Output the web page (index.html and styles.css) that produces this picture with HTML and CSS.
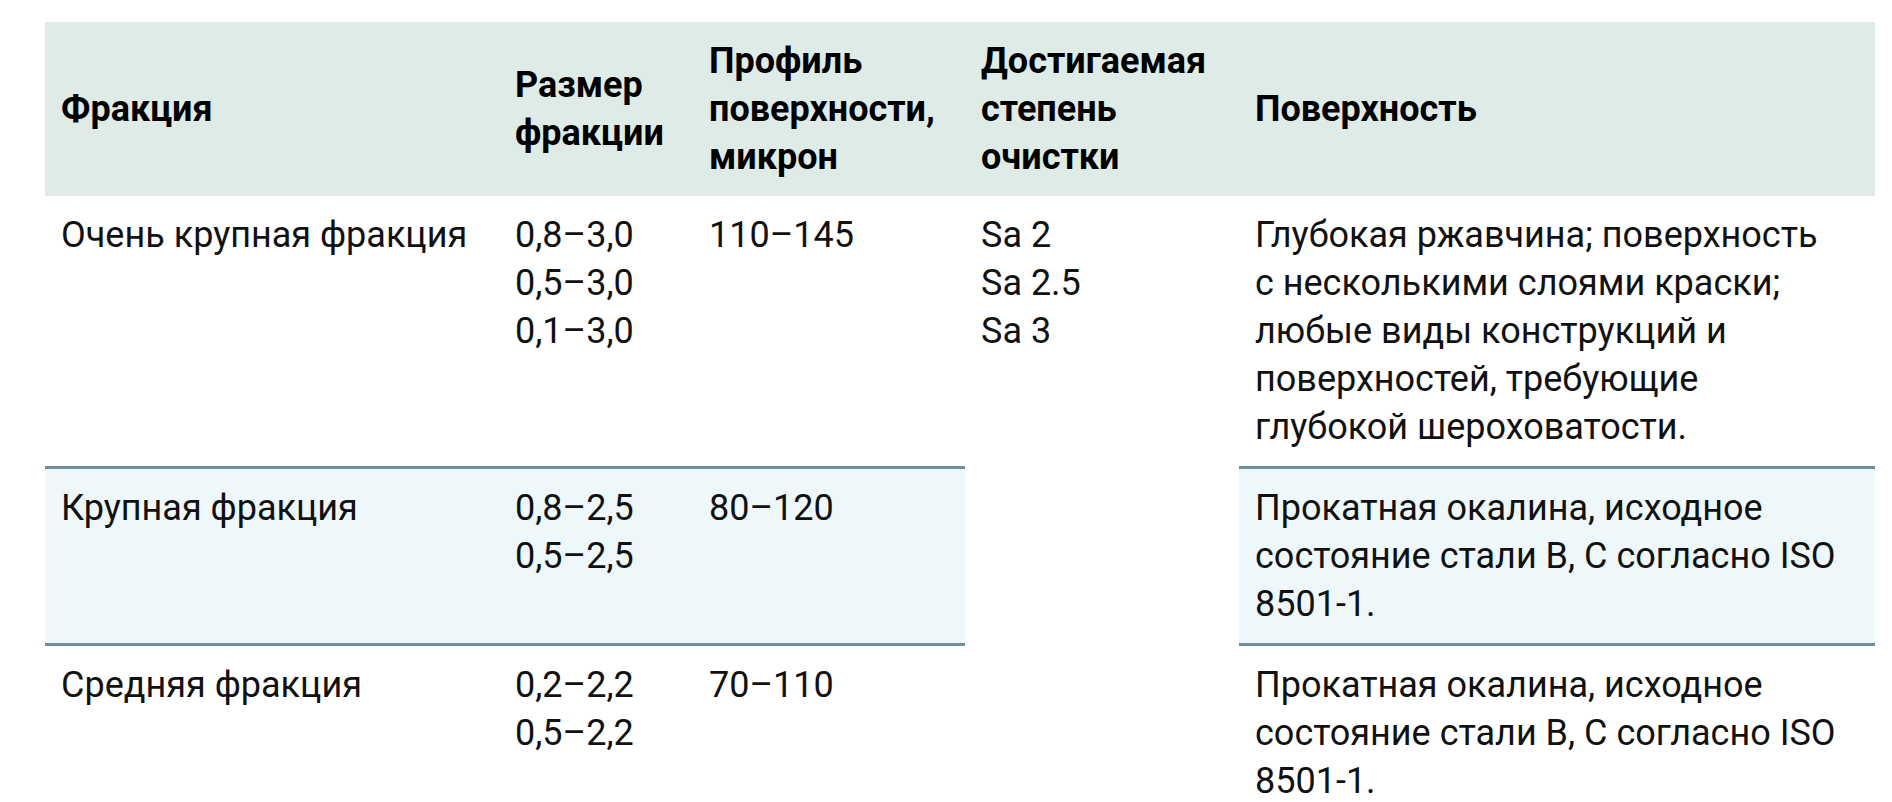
FILE: index.html
```html
<!DOCTYPE html>
<html lang="ru">
<head>
<meta charset="utf-8">
<link rel="stylesheet" href="styles.css">
</head>
<body>
<div class="wrap">
<table class="grit">
  <colgroup>
    <col class="c1"><col class="c2"><col class="c3"><col class="c4"><col class="c5">
  </colgroup>
  <thead>
    <tr>
      <th>Фракция</th>
      <th>Размер фракции</th>
      <th>Профиль поверхности, микрон</th>
      <th>Достигаемая степень очистки</th>
      <th class="last">Поверхность</th>
    </tr>
  </thead>
  <tbody>
    <tr>
      <td>Очень крупная фракция</td>
      <td>0,8–3,0<br>0,5–3,0<br>0,1–3,0</td>
      <td>110–145</td>
      <td rowspan="3" class="grade">Sa 2<br>Sa 2.5<br>Sa 3</td>
      <td class="last">Глубокая ржавчина; поверхность с несколькими слоями краски; любые виды конструкций и поверхностей, требующие глубокой шероховатости.</td>
    </tr>
    <tr class="alt">
      <td>Крупная фракция</td>
      <td>0,8–2,5<br>0,5–2,5</td>
      <td>80–120</td>
      <td class="last">Прокатная окалина, исходное состояние стали B, C согласно ISO 8501-1.</td>
    </tr>
    <tr>
      <td>Средняя фракция</td>
      <td>0,2–2,2<br>0,5–2,2</td>
      <td>70–110</td>
      <td class="last">Прокатная окалина, исходное состояние стали B, C согласно ISO 8501-1.</td>
    </tr>
  </tbody>
</table>
</div>
</body>
</html>
```

FILE: styles.css
```css
html, body {
  margin: 0;
  padding: 0;
  background: #ffffff;
}

.wrap {
  padding: 22px 17px 0 45px;
}

.grit {
  width: 1830px;
  table-layout: fixed;
  border-collapse: separate;
  border-spacing: 0;
  font-family: Roboto, "Noto Sans", sans-serif;
  font-size: 36px;
  line-height: 48px;
  color: #111111;
}

.c1 { width: 454px; }
.c2 { width: 194px; }
.c3 { width: 272px; }
.c4 { width: 274px; }
.c5 { width: 636px; }

.grit th {
  background: #dfebe7;
  font-weight: 700;
  text-align: left;
  vertical-align: middle;
  padding: 15px 16px;
  color: #000000;
}

.grit td {
  vertical-align: top;
  text-align: left;
  padding: 15px 16px;
  font-weight: 400;
}

.grit .last {
  padding-right: 34px;
}

.grit tr.alt td {
  background: #eef7f9;
  border-top: 3px solid #6e8f9b;
  border-bottom: 3px solid #6e8f9b;
}

.grit td.grade {
  background: #ffffff;
}
```
